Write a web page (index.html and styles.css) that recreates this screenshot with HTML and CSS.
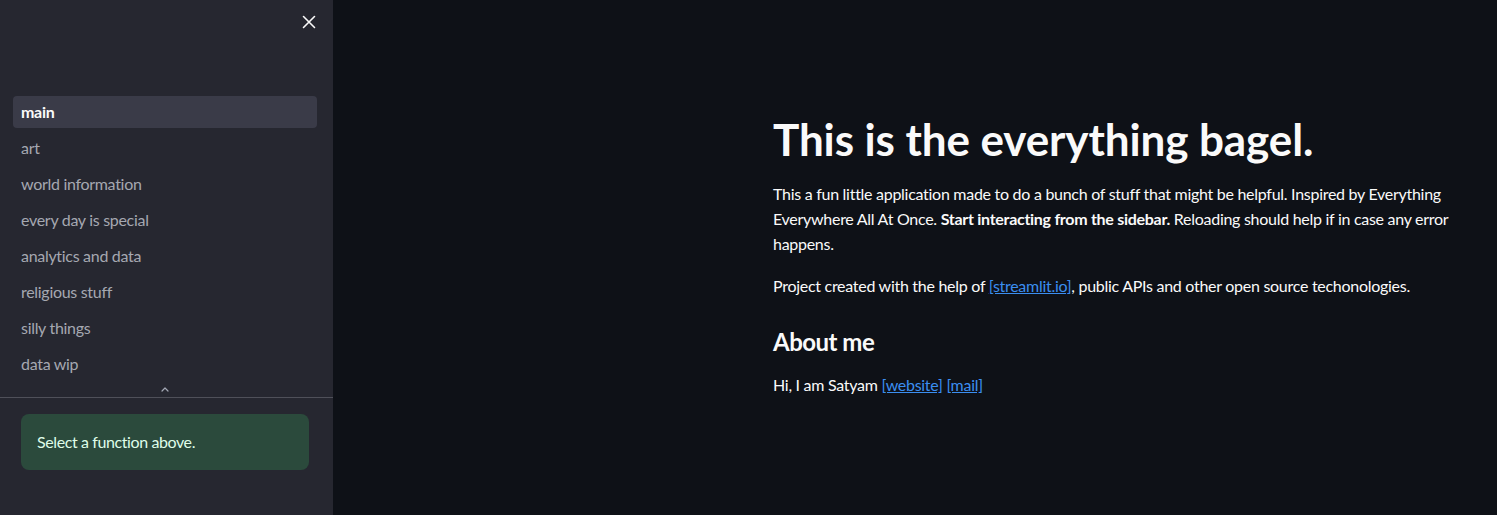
FILE: index.html
```html
<!DOCTYPE html>
<html>
<head>
<meta charset="utf-8">
<link rel="stylesheet" href="styles.css">
</head>
<body>
<div class="app">
  <aside class="sidebar">
    <div class="sidebar-top">
      <button class="close-btn" aria-label="Close sidebar">
        <svg width="14" height="14" viewBox="0 0 14 14"><path d="M1.5 1.5 L12.5 12.5 M12.5 1.5 L1.5 12.5" stroke="#fafafa" stroke-width="1.6" stroke-linecap="round"/></svg>
      </button>
    </div>
    <nav class="nav">
      <a class="nav-item active">main</a>
      <a class="nav-item">art</a>
      <a class="nav-item">world information</a>
      <a class="nav-item">every day is special</a>
      <a class="nav-item">analytics and data</a>
      <a class="nav-item">religious stuff</a>
      <a class="nav-item">silly things</a>
      <a class="nav-item">data wip</a>
    </nav>
    <div class="nav-toggle">
      <svg width="8" height="5" viewBox="0 0 8 5"><path d="M1 4 L4 1 L7 4" stroke="#a3a8b4" stroke-width="1.2" fill="none" stroke-linecap="round" stroke-linejoin="round"/></svg>
    </div>
    <div class="sidebar-body">
      <div class="alert">Select a function above.</div>
    </div>
  </aside>
  <main class="main">
    <div class="content">
      <h1 class="title">This is the everything bagel.</h1>
      <p class="para">This a fun little application made to do a bunch of stuff that might be helpful. Inspired by Everything Everywhere All At Once. <strong>Start interacting from the sidebar.</strong> Reloading should help if in case any error happens.</p>
      <p class="para">Project created with the help of <a class="link" href="#">[streamlit.io]</a>, public APIs and other open source techonologies.</p>
      <h3 class="subtitle">About me</h3>
      <p class="para">Hi, I am Satyam <a class="link" href="#">[website]</a> <a class="link" href="#">[mail]</a></p>
    </div>
  </main>
</div>
</body>
</html>
```

FILE: styles.css
```css
* { box-sizing: border-box; }
html, body {
  margin: 0;
  padding: 0;
  height: 100%;
  background: #0e1117;
  font-family: "Lato", "Roboto", sans-serif;
  color: #fafafa;
}
.app {
  display: flex;
  height: 515px;
}
.sidebar {
  width: 333px;
  flex: 0 0 333px;
  background: #262730;
  display: flex;
  flex-direction: column;
}
.sidebar-top {
  display: flex;
  justify-content: flex-end;
  padding: 15px 17px 0 0;
  height: 96px;
}
.close-btn {
  background: none;
  border: none;
  padding: 0;
  width: 14px;
  height: 14px;
  cursor: pointer;
  display: flex;
}
.nav {
  display: flex;
  flex-direction: column;
  gap: 4px;
  padding: 0 16px 0 13px;
}
.nav-item {
  display: flex;
  align-items: center;
  height: 32px;
  padding: 0 8px 1px 8px;
  border-radius: 4px;
  font-size: 16px;
  letter-spacing: -0.3px;
  color: #a5a8b1;
  cursor: pointer;
}
.nav-item.active {
  background: #3a3b48;
  color: #fafafa;
  font-weight: 700;
}
.nav-toggle {
  display: flex;
  justify-content: center;
  padding: 7px 4px 0 0;
  height: 17px;
}
.sidebar-body {
  border-top: 1px solid #4f5059;
  padding: 16px 24px 0 21px;
}
.alert {
  background: #2b4a3c;
  color: #dffde9;
  border-radius: 8px;
  padding: 16px;
  font-size: 16px;
  line-height: 24px;
  letter-spacing: -0.4px;
}
.main {
  flex: 1;
  background: #0e1117;
}
.content {
  margin-left: 440px;
  width: 682px;
  padding-top: 113px;
}
.title {
  font-size: 44px;
  font-weight: 700;
  line-height: 1.2;
  margin: 0 0 15px 0;
  letter-spacing: -0.1px;
}
.para {
  font-size: 16px;
  line-height: 25px;
  letter-spacing: -0.28px;
  margin: 0 0 17px 0;
}
.para strong { font-weight: 700; }
.subtitle {
  font-size: 24px;
  font-weight: 700;
  line-height: 1.2;
  letter-spacing: -0.5px;
  margin: 30px 0 15px 0;
}
.link {
  color: #3b8ef0;
  text-decoration: underline;
}
```
